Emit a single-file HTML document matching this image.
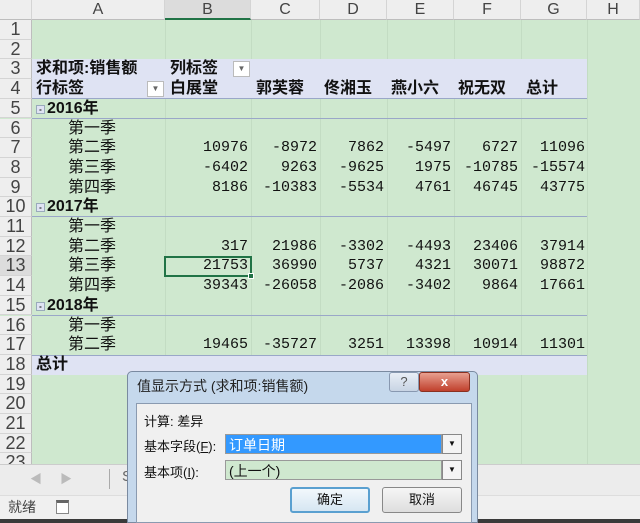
<!DOCTYPE html>
<html><head><meta charset="utf-8"><style>
*{margin:0;padding:0;box-sizing:border-box}
body{width:640px;height:523px;overflow:hidden;position:relative;background:#cfe8cf;font-family:"Liberation Sans","Noto Sans CJK SC",sans-serif;font-size:16px;color:#111}
.abs{position:absolute}
.colh{position:absolute;top:0;height:20px;background:#eeeeee;border-right:1px solid #d4d4d4;border-bottom:1px solid #bdbdbd;text-align:center;font-size:16px;line-height:20px;color:#444}
.rowh{position:absolute;left:0;width:32px;background:#eeeeee;border-bottom:1px solid #d4d4d4;border-right:1px solid #bdbdbd;text-align:center;font-size:18px;color:#444;height:19.7px;line-height:19.7px}
.n{font-family:"Liberation Mono",monospace;font-size:15px;text-align:right}
.b{font-weight:bold}
.lav{background:#dfe3f3}
.vl{position:absolute;top:20px;height:444px;width:1px;background:#c3dcc3}
.bx{display:inline-block;width:9px;height:9px;background:#dfe3f3;border:1px solid #9ab;font-size:8px;line-height:7px;text-align:center;vertical-align:1px;margin-right:2px}
</style></head><body>
<div class="vl" style="left:165px"></div><div class="vl" style="left:251px"></div><div class="vl" style="left:320px"></div><div class="vl" style="left:387px"></div><div class="vl" style="left:454px"></div><div class="vl" style="left:521px"></div><div class="vl" style="left:587px"></div>
<div class="colh" style="left:0;width:32px"></div>
<div class="colh" style="left:32px;width:133px">A</div>
<div class="colh" style="left:165px;width:86px;background:#dcdcdc;border-bottom:2px solid #217346">B</div>
<div class="colh" style="left:251px;width:69px">C</div>
<div class="colh" style="left:320px;width:67px">D</div>
<div class="colh" style="left:387px;width:67px">E</div>
<div class="colh" style="left:454px;width:67px">F</div>
<div class="colh" style="left:521px;width:66px">G</div>
<div class="colh" style="left:587px;width:53px">H</div>
<div class="abs lav" style="left:32px;top:59.4px;width:555px;height:39.4px;border-bottom:1px solid #9aa7c8"></div>
<div class="abs lav" style="left:32px;top:354.9px;width:555px;height:19.7px;border-top:1px solid #9aa7c8"></div>
<div class="rowh" style="top:20px">1</div><div class="rowh" style="top:39.7px">2</div><div class="rowh" style="top:59.4px">3</div><div class="rowh" style="top:79.1px">4</div><div class="rowh" style="top:98.8px">5</div><div class="rowh" style="top:118.5px">6</div><div class="rowh" style="top:138.2px">7</div><div class="rowh" style="top:157.9px">8</div><div class="rowh" style="top:177.6px">9</div><div class="rowh" style="top:197.3px">10</div><div class="rowh" style="top:217px">11</div><div class="rowh" style="top:236.7px">12</div><div class="rowh" style="top:256.4px;background:#dcdcdc">13</div><div class="rowh" style="top:276.1px">14</div><div class="rowh" style="top:295.8px">15</div><div class="rowh" style="top:315.5px">16</div><div class="rowh" style="top:335.2px">17</div><div class="rowh" style="top:354.9px">18</div><div class="rowh" style="top:374.6px">19</div><div class="rowh" style="top:394.3px">20</div><div class="rowh" style="top:414px">21</div><div class="rowh" style="top:433.7px">22</div><div class="rowh" style="top:453.4px">23</div>
<div class="abs b" style="left:36px;top:59.4px;line-height:19.7px">求和项:销售额</div>
<div class="abs b" style="left:170px;top:59.4px;line-height:19.7px">列标签</div>
<div class="abs" style="left:233px;top:61px;width:17px;height:16px;background:#fff;border:1px solid #bbb;font-size:8px;text-align:center;line-height:14px;color:#666">▼</div>
<div class="abs b" style="left:36px;top:79.1px;line-height:19.7px">行标签</div>
<div class="abs" style="left:147px;top:81px;width:17px;height:16px;background:#fff;border:1px solid #bbb;font-size:8px;text-align:center;line-height:14px;color:#666">▼</div>
<div class="abs b" style="left:170px;top:79.1px;line-height:19.7px">白展堂</div>
<div class="abs b" style="left:256px;top:79.1px;line-height:19.7px">郭芙蓉</div>
<div class="abs b" style="left:324px;top:79.1px;line-height:19.7px">佟湘玉</div>
<div class="abs b" style="left:391px;top:79.1px;line-height:19.7px">燕小六</div>
<div class="abs b" style="left:458px;top:79.1px;line-height:19.7px">祝无双</div>
<div class="abs b" style="left:526px;top:79.1px;line-height:19.7px">总计</div>
<div class="abs" style="left:32px;top:117.5px;width:555px;height:1px;background:#9aa7c8"></div>
<div class="abs" style="left:32px;top:216px;width:555px;height:1px;background:#9aa7c8"></div>
<div class="abs" style="left:32px;top:314.5px;width:555px;height:1px;background:#9aa7c8"></div>
<div class="abs b" style="left:36px;top:98.8px;line-height:19.7px"><span class="bx">-</span>2016年</div>
<div class="abs b" style="left:36px;top:197.3px;line-height:19.7px"><span class="bx">-</span>2017年</div>
<div class="abs b" style="left:36px;top:295.8px;line-height:19.7px"><span class="bx">-</span>2018年</div>
<div class="abs b" style="left:36px;top:354.9px;line-height:19.7px">总计</div>
<div class="abs" style="left:68px;top:118.5px;line-height:19.7px">第一季<br>第二季<br>第三季<br>第四季</div>
<div class="abs" style="left:68px;top:217px;line-height:19.7px">第一季<br>第二季<br>第三季<br>第四季</div>
<div class="abs" style="left:68px;top:315.5px;line-height:19.7px">第一季<br>第二季</div>
<div class="abs n" style="right:392px;top:138.2px;line-height:19.7px">10976<br>-6402<br>8186<br><br><br>317<br>21753<br>39343<br><br><br>19465</div>
<div class="abs n" style="right:323px;top:138.2px;line-height:19.7px">-8972<br>9263<br>-10383<br><br><br>21986<br>36990<br>-26058<br><br><br>-35727</div>
<div class="abs n" style="right:256px;top:138.2px;line-height:19.7px">7862<br>-9625<br>-5534<br><br><br>-3302<br>5737<br>-2086<br><br><br>3251</div>
<div class="abs n" style="right:189px;top:138.2px;line-height:19.7px">-5497<br>1975<br>4761<br><br><br>-4493<br>4321<br>-3402<br><br><br>13398</div>
<div class="abs n" style="right:122px;top:138.2px;line-height:19.7px">6727<br>-10785<br>46745<br><br><br>23406<br>30071<br>9864<br><br><br>10914</div>
<div class="abs n" style="right:55px;top:138.2px;line-height:19.7px">11096<br>-15574<br>43775<br><br><br>37914<br>98872<br>17661<br><br><br>11301</div>
<div class="abs" style="left:164px;top:255.5px;width:88px;height:21px;border:2px solid #217346"></div>
<div class="abs" style="left:248px;top:273px;width:6px;height:6px;background:#217346;border:1px solid #fff"></div>
<div class="abs" style="left:0;top:464px;width:640px;height:31px;background:#ececec;border-top:1px solid #ccc"></div>
<div class="abs" style="left:30px;top:470px;color:#bbb;font-size:12px">◀</div>
<div class="abs" style="left:60px;top:470px;color:#bbb;font-size:12px">▶</div>
<div class="abs" style="left:109px;top:469px;width:1px;height:20px;background:#aaa"></div>
<div class="abs" style="left:122px;top:468px;color:#666;font-size:15px">S</div>
<div class="abs" style="left:0;top:495px;width:640px;height:25px;background:#f0f0f0;border-top:1px solid #ddd"></div>
<div class="abs" style="left:8px;top:497px;font-size:14px;color:#444">就绪</div>
<div class="abs" style="left:56px;top:500px;width:13px;height:14px;border:1px solid #888;border-top:3px solid #666;background:#fff"></div>
<div class="abs" style="left:0;top:519px;width:640px;height:4px;background:#3a3a3a"></div>
<div class="abs" style="left:127px;top:371px;width:351px;height:152px;background:#c5d8ec;border:1px solid #7a8aa0;border-radius:5px 5px 0 0"></div>
<div class="abs" style="left:137px;top:376px;font-size:14px;color:#222">值显示方式 (求和项:销售额)</div>
<div class="abs" style="left:389px;top:372px;width:30px;height:20px;background:linear-gradient(#e8eef6,#c8d4e4);border:1px solid #8898b0;border-radius:3px;text-align:center;font-size:13px;color:#555;line-height:18px">?</div>
<div class="abs" style="left:419px;top:372px;width:51px;height:20px;background:linear-gradient(#e8a090,#c0402c);border:1px solid #8a3020;border-radius:3px;text-align:center;font-size:13px;color:#fff;font-weight:bold;line-height:18px">x</div>
<div class="abs" style="left:136px;top:403px;width:336px;height:120px;background:#f0f0f0;border:1px solid #8a9ab0"></div>
<div class="abs" style="left:144px;top:411px;font-size:13px">计算: 差异</div>
<div class="abs" style="left:144px;top:436px;font-size:13px">基本字段(<u>F</u>):</div>
<div class="abs" style="left:225px;top:434px;width:217px;height:20px;background:#3399ff;color:#fff;font-size:14px;line-height:20px;padding-left:3px;border:1px solid #999">订单日期</div>
<div class="abs" style="left:442px;top:434px;width:20px;height:20px;background:#f4f4f4;border:1px solid #888;font-size:8px;text-align:center;line-height:18px">▼</div>
<div class="abs" style="left:144px;top:462px;font-size:13px">基本项(<u>I</u>):</div>
<div class="abs" style="left:225px;top:460px;width:217px;height:20px;background:#cfe8cf;font-size:14px;line-height:20px;padding-left:3px;border:1px solid #999">(上一个)</div>
<div class="abs" style="left:442px;top:460px;width:20px;height:20px;background:#f4f4f4;border:1px solid #888;font-size:8px;text-align:center;line-height:18px">▼</div>
<div class="abs" style="left:290px;top:487px;width:80px;height:26px;background:linear-gradient(#f2f8fc,#d6e6f2);border:2px solid #5aa0d0;border-radius:3px;text-align:center;line-height:22px;font-size:13px">确定</div>
<div class="abs" style="left:382px;top:487px;width:80px;height:26px;background:linear-gradient(#f6f6f6,#dedede);border:1px solid #888;border-radius:3px;text-align:center;line-height:24px;font-size:13px">取消</div>
</body></html>
